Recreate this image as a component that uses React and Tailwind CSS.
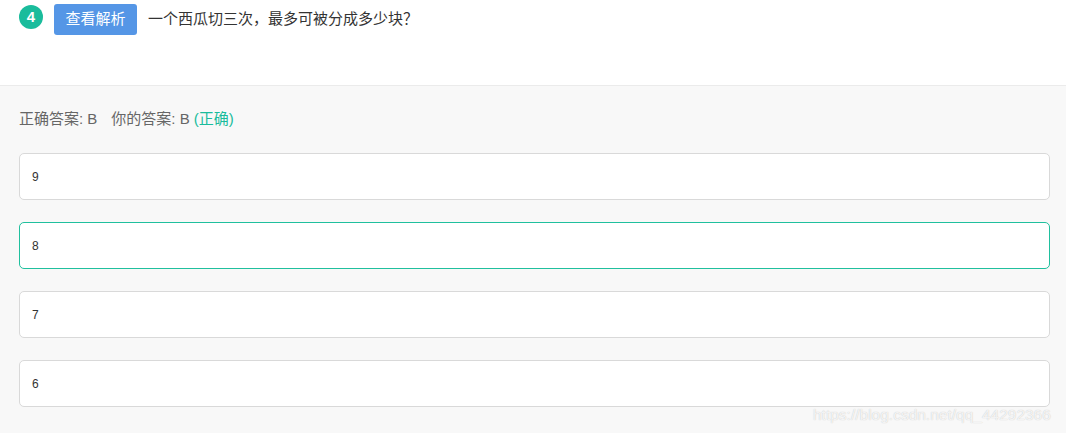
import React from 'react';

const options = [
  { label: '9', correct: false },
  { label: '8', correct: true },
  { label: '7', correct: false },
  { label: '6', correct: false },
];

export default function App() {
  return (
    <div
      className="w-[1066px] h-[433px] overflow-hidden bg-[#f8f8f8] relative"
      style={{ fontFamily: '"Helvetica Neue", Arial, "Noto Sans CJK SC", sans-serif' }}
    >
      {/* Question header */}
      <div className="h-[86px] bg-white border-b border-[#ebebeb] pl-[19px] pt-[4px] flex items-start">
        <div className="w-6 h-6 mt-[1px] rounded-full bg-[#1abc9c] text-white text-[15px] font-bold flex items-center justify-center">
          4
        </div>
        <button className="ml-[11px] w-[83px] h-[31px] rounded-[3px] bg-[#5596e6] text-white text-[15px] flex items-center justify-center">
          查看解析
        </button>
        <p className="ml-[11px] mt-[4px] text-[15px] leading-[22px] text-[#333]">一个西瓜切三次，最多可被分成多少块？</p>
      </div>

      {/* Answer */}
      <div className="px-[19px] pt-[23px]">
        <p className="text-[15px] text-[#666] leading-[20px]">
          正确答案: B<span className="ml-[14px]">你的答案: B</span>{' '}
          <span className="text-[#1abc9c]">(正确)</span>
        </p>

        <div className="mt-[24px] flex flex-col gap-[22px] w-[1031px]">
          {options.map((o) => (
            <div
              key={o.label}
              className={`h-[47px] rounded-[5px] bg-white border flex items-center pl-[12px] text-[12px] text-[#333] ${
                o.correct ? 'border-[#20c09e]' : 'border-[#d9d9d9]'
              }`}
            >
              {o.label}
            </div>
          ))}
        </div>
      </div>

      {/* Watermark */}
      <div
        className="absolute left-[813px] top-[403px] text-[15.5px] text-white/80"
        style={{ textShadow: '0 0 1px rgba(0,0,0,0.25)' }}
      >
        https://blog.csdn.net/qq_44292366
      </div>
    </div>
  );
}
